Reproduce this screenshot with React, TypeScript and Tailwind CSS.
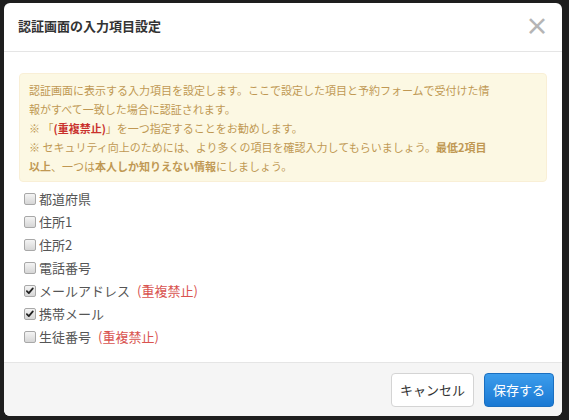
import React from "react";

const items: { label: string; checked: boolean; unique?: boolean }[] = [
  { label: "都道府県", checked: false },
  { label: "住所1", checked: false },
  { label: "住所2", checked: false },
  { label: "電話番号", checked: false },
  { label: "メールアドレス", checked: true, unique: true },
  { label: "携帯メール", checked: true },
  { label: "生徒番号", checked: false, unique: true },
];

function Box({ checked }: { checked: boolean }) {
  return (
    <span className="relative inline-block w-[12px] h-[12px] rounded-[2px] border border-[#a8a8a8] bg-gradient-to-b from-[#f4f4f4] to-[#d6d6d6] shrink-0">
      {checked && (
        <svg viewBox="0 0 12 12" className="absolute left-[0px] top-[0px] w-[10px] h-[10px]">
          <path d="M2.2 6.2 L4.6 8.6 L9.4 2.8" fill="none" stroke="#222" strokeWidth="2.1" strokeLinecap="round" strokeLinejoin="round" />
        </svg>
      )}
    </span>
  );
}

export default function App() {
  const font = { fontFamily: '"Noto Sans CJK JP", "Noto Sans", sans-serif' };
  return (
    <div className="w-[569px] h-[420px] bg-[#1e1e1e] pt-[3px] pl-[4px] pr-[7px] pb-[4px] overflow-hidden" style={font}>
      <div className="w-full h-full bg-white rounded-[6px] flex flex-col overflow-hidden">
        <div className="h-[49px] shrink-0 flex items-center justify-between pl-[14px] pr-[13px] border-b border-[#e5e5e5]">
          <h1 className="text-[13px] font-bold text-[#333] leading-none mt-[-3px]">認証画面の入力項目設定</h1>
          <span className="text-[24px] leading-none text-[#b5b5b5] font-bold mt-[-4px]">×</span>
        </div>
        <div className="flex-1 px-[15px] pt-[21px]">
          <div className="bg-[#fcf8e3] border border-[#f9efd6] rounded-[4px] pl-[9px] pr-[6px] pt-[7px] pb-[5px] text-[11px] leading-[19px] text-[#c09853]">
            <div className="whitespace-nowrap">認証画面に表示する入力項目を設定します。ここで設定した項目と予約フォームで受付けた情</div>
            <div className="whitespace-nowrap">報がすべて一致した場合に認証されます。</div>
            <div className="whitespace-nowrap">※ 「<span className="font-bold text-[#c9302c]">(重複禁止)</span>」を一つ指定することをお勧めします。</div>
            <div className="whitespace-nowrap">※ セキュリティ向上のためには、より多くの項目を確認入力してもらいましょう。<span className="font-bold">最低2項目</span></div>
            <div className="whitespace-nowrap"><span className="font-bold">以上</span>、一つは<span className="font-bold">本人しか知りえない情報</span>にしましょう。</div>
          </div>
          <div className="mt-[5px] pl-[5px] flex flex-col">
            {items.map((it) => (
              <label key={it.label} className="h-[23px] flex items-center gap-[3px] text-[13px] text-[#555]">
                <Box checked={it.checked} />
                <span>{it.label}</span>
                {it.unique && <span className="text-[#d9534f] ml-[4px]">(重複禁止)</span>}
              </label>
            ))}
          </div>
        </div>
        <div className="h-[54px] shrink-0 border-t border-[#e5e5e5] bg-[#f5f5f5] flex items-center justify-end gap-[10px] pr-[8px] pt-[1px]">
          <button className="h-[34px] px-[8px] rounded-[4px] border border-[#d4d4d4] bg-white text-[13px] text-[#333]">キャンセル</button>
          <button className="h-[34px] px-[8px] rounded-[4px] border border-[#1a6fc0] bg-gradient-to-b from-[#3c9dec] to-[#1878d3] text-[13px] text-white">保存する</button>
        </div>
      </div>
    </div>
  );
}
